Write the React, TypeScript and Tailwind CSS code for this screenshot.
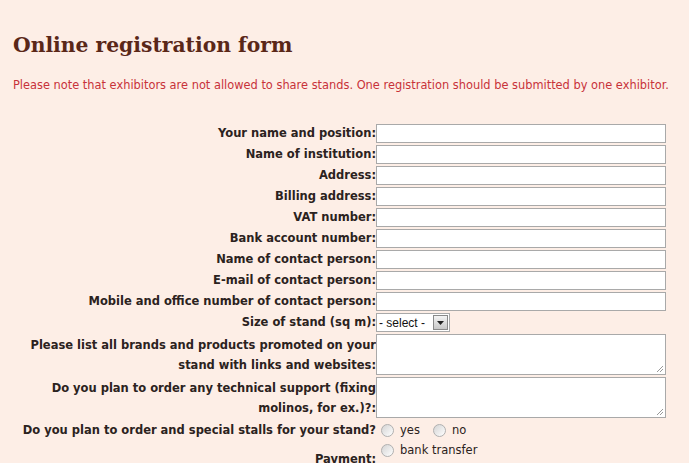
const fields = [
  "Your name and position:",
  "Name of institution:",
  "Address:",
  "Billing address:",
  "VAT number:",
  "Bank account number:",
  "Name of contact person:",
  "E-mail of contact person:",
  "Mobile and office number of contact person:",
];

function Radio({ label, tall }: { label: string; tall?: boolean }) {
  return (
    <label className={"flex items-center gap-[6px] " + (tall ? "h-[21px]" : "h-[19px]")}>
      <span className="w-[13px] h-[13px] rounded-full border border-[#b0b0b0] bg-gradient-to-br from-[#d4d4d4] to-[#ffffff]" />
      <span>{label}</span>
    </label>
  );
}

function Grip() {
  return (
    <svg className="absolute right-[1px] bottom-[1px]" width="8" height="8" viewBox="0 0 8 8">
      <path d="M7 1L1 7M7 4L4 7" stroke="#999" strokeWidth="1" />
    </svg>
  );
}

export default function App() {
  return (
    <div className="h-[463px] overflow-hidden bg-[#fdeee6] px-[13px] pt-[31px] font-['DejaVu_Sans',sans-serif] text-[11.5px] text-[#2b2220]">
      <h1 className="font-['DejaVu_Serif',serif] font-bold text-[20.3px] leading-[28px] text-[#5a2718]">
        Online registration form
      </h1>
      <p className="mt-[19px] text-[11.4px] text-[#c8323a] leading-[14px] whitespace-nowrap">
        Please note that exhibitors are not allowed to share stands. One registration should be submitted by one exhibitor.
      </p>

      <div className="mt-[32px] ml-[7px] grid grid-cols-[356px_290px] gap-y-[2px] font-bold">
        {fields.map((f) => (
          <div key={f} className="contents">
            <div className="text-right leading-[19px] whitespace-nowrap">{f}</div>
            <input className="h-[19px] bg-white border border-[#a9a9a9] outline-none" />
          </div>
        ))}

        <div className="text-right leading-[19px]">Size of stand (sq m):</div>
        <div className="flex">
          <div className="h-[19px] w-[74px] flex items-center bg-white border border-[#a9a9a9] font-normal text-[12px] font-['Liberation_Sans',sans-serif]">
            <span className="flex-1 pl-[2px] text-[#111]">- select -</span>
            <span className="w-[15px] h-[15px] mr-[1px] flex items-center justify-center border border-[#8a8a8a] bg-gradient-to-b from-[#f4f4f4] to-[#c8c8c8]">
              <svg width="7" height="4" viewBox="0 0 7 4">
                <path d="M0 0h7L3.5 4z" fill="#222" />
              </svg>
            </span>
          </div>
        </div>

        <div className="text-right leading-[20px] flex items-center justify-end">
          Please list all brands and products promoted on your stand with links and websites:
        </div>
        <div className="relative h-[41px] bg-white border border-[#a9a9a9]">
          <Grip />
        </div>

        <div className="text-right leading-[20px] flex items-center justify-end">
          Do you plan to order any technical support (fixing molinos, for ex.)?:
        </div>
        <div className="relative h-[41px] bg-white border border-[#a9a9a9]">
          <Grip />
        </div>

        <div className="text-right leading-[21px] whitespace-nowrap">
          Do you plan to order and special stalls for your stand?
        </div>
        <div className="flex items-center gap-[13px] pl-[5px] font-normal">
          <Radio label="yes" tall />
          <Radio label="no" tall />
        </div>

        <div className="text-right flex items-center justify-end -mt-[2px]">Payment:</div>
        <div className="flex flex-col pl-[5px] font-normal -mt-[2px]">
          <Radio label="bank transfer" />
          <Radio label="cash" />
        </div>
      </div>
    </div>
  );
}
